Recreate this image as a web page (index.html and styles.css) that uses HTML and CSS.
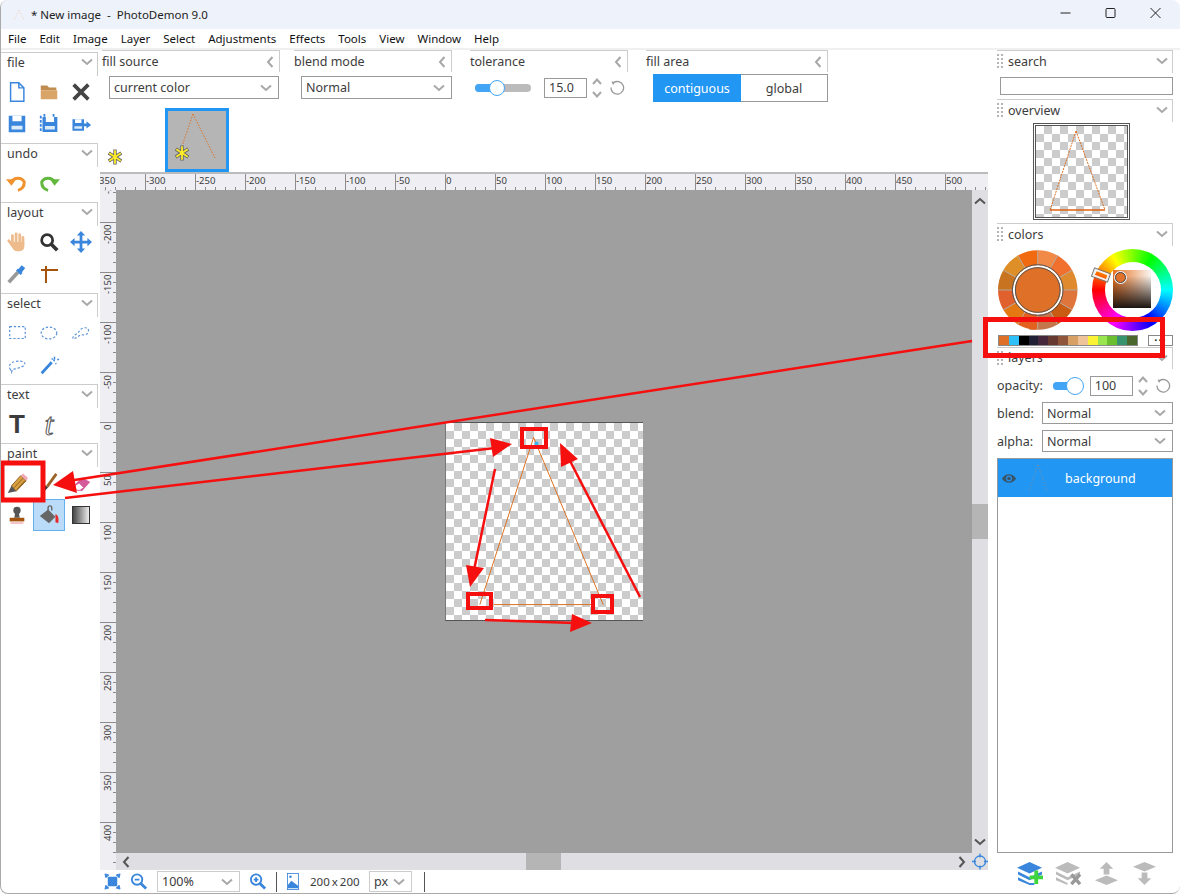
FILE: index.html
```html
<!DOCTYPE html>
<html>
<head>
    <title>PhotoDemon</title>
    <link rel="stylesheet" href="styles.css">
</head>
<body>
    <svg class="sprite" width="0" height="0">
        <symbol id="chev-down" viewBox="0 0 12 8"><path d="M1 1.500 6 6l5-4.500" fill="none" stroke="#a8a8a8" stroke-width="2"/></symbol>
        <symbol id="chev-left" viewBox="0 0 8 12"><path d="M6.500 1 2 6l4.500 5" fill="none" stroke="#a8a8a8" stroke-width="2"/></symbol>
        <symbol id="spin" viewBox="0 0 12 24"><path d="M2 8 6 3.500 10 8M2 16l4 4.500 4-4.500" fill="none" stroke="#a8a8a8" stroke-width="2"/></symbol>
        <symbol id="reset" viewBox="0 0 16 16"><path d="M4.500 2.800A6.300 6.300 0 1 1 2 7.500" fill="none" stroke="#999" stroke-width="1.300"/><path d="M2.500 1.500 6 2 4 5z" fill="#999"/></symbol>
        <symbol id="grip" viewBox="0 0 6 14"><path d="M0 0h2v2H0zM4 0h2v2H4zM0 4h2v2H0zM4 4h2v2H4zM0 8h2v2H0zM4 8h2v2H4zM0 12h2v2H0zM4 12h2v2H4z" fill="#b4b4b4"/></symbol>
        <symbol id="flower" viewBox="0 0 14 14"><path d="M7 .5v13M1.500 3.500l11 7M12.500 3.500l-11 7" stroke="#666" stroke-width="3"/><path d="M7 1v12M2 3.800l10 6.400M12 3.800 2 10.200" stroke="#ffec2a" stroke-width="1.600"/></symbol>
        <symbol id="floppy" viewBox="0 0 20 20"><path d="M1 1h18v18H1z" fill="#3a86dc"/><path d="M5 1h10v6H5z" fill="#fff"/><path d="M4 12h12v4H4z" fill="#dcebfa"/></symbol>
    </svg>

    <div class="window">
        <div class="titlebar">
            <svg class="app-icon" viewBox="0 0 14 14"><path d="M7 2 2 12M7 2l5 10" stroke="#ecd9c8" stroke-dasharray="1.500 1.500" fill="none"/></svg>
            <span class="title-text">* New image &nbsp;- &nbsp;PhotoDemon 9.0</span>
            <div class="window-btns">
                <svg viewBox="0 0 12 12"><path d="M1 6h10" stroke="#222" stroke-width="1"/></svg>
                <svg viewBox="0 0 12 12"><rect x="1.500" y="1.500" width="9" height="9" rx="1" fill="none" stroke="#222"/></svg>
                <svg viewBox="0 0 12 12"><path d="M1 1l10 10M11 1 1 11" stroke="#222"/></svg>
            </div>
        </div>
        <div class="menubar">
            <span>File</span><span>Edit</span><span>Image</span><span>Layer</span><span>Select</span><span>Adjustments</span><span>Effects</span><span>Tools</span><span>View</span><span>Window</span><span>Help</span>
        </div>

        <div class="main">
            <!-- left toolbox -->
            <div class="toolbox">
                <div class="tool-head first">file <svg class="chev"><use href="#chev-down"/></svg></div>
                <div class="tool-grid">
                    <button class="tool"><svg viewBox="0 0 24 24"><path d="M5 2h9l5.500 5.500V22H5z" fill="#fff" stroke="#3a86dc" stroke-width="1.600"/><path d="M14 2v5.500h5.500" fill="none" stroke="#3a86dc" stroke-width="1.600"/></svg></button>
                    <button class="tool"><svg viewBox="0 0 24 24"><path d="M3 7V5h7l2 2h8v3H3z" fill="#c08c50"/><path d="M3 10h18v10H3z" fill="#d9a468"/></svg></button>
                    <button class="tool"><svg viewBox="0 0 24 24"><path d="M4 4l16 16M20 4 4 20" stroke="#444" stroke-width="4"/></svg></button>
                    <button class="tool"><svg viewBox="0 0 24 24"><use href="#floppy" x="2" y="2" width="20" height="20"/></svg></button>
                    <button class="tool"><svg viewBox="0 0 24 24"><use href="#floppy" x="4" y="3" width="18" height="19"/><path d="M3 3v18M7 1v3M17 1v3" stroke="#3a86dc" stroke-width="2" stroke-dasharray="3 1.500"/></svg></button>
                    <button class="tool"><svg viewBox="0 0 24 24"><use href="#floppy" x="2" y="6" width="14" height="14"/><path d="M14 13h6" stroke="#3a86dc" stroke-width="3"/><path d="M18 9l5 4-5 4z" fill="#3a86dc"/></svg></button>
                </div>
                <div class="tool-head">undo <svg class="chev"><use href="#chev-down"/></svg></div>
                <div class="tool-grid">
                    <button class="tool"><svg viewBox="0 0 24 24"><path d="M6 11a7.500 6.500 0 0 1 14 0c0 5-3 8-7 9" fill="none" stroke="#f0922e" stroke-width="3.200"/><path d="M0 8h11l-5 7z" fill="#f0922e"/></svg></button>
                    <button class="tool"><svg viewBox="0 0 24 24"><path d="M18 11a7.500 6.500 0 0 0-14 0c0 5 3 8 7 9" fill="none" stroke="#62b83c" stroke-width="3.200"/><path d="M24 8H13l5 7z" fill="#62b83c"/></svg></button>
                </div>
                <div class="tool-head">layout <svg class="chev"><use href="#chev-down"/></svg></div>
                <div class="tool-grid">
                    <button class="tool"><svg viewBox="0 0 24 24"><path d="M7 16 3 10.500M7 14V5M11 13V3M15 13V4M18.500 14V7" stroke="#eebc8c" stroke-width="3" stroke-linecap="round"/><path d="M6 12h14v5c0 3-2 5-5 5h-3c-2.500 0-4-1-6-5z" fill="#eebc8c"/></svg></button>
                    <button class="tool"><svg viewBox="0 0 24 24"><circle cx="10" cy="10" r="6" fill="none" stroke="#333" stroke-width="3"/><path d="M14.500 14.500 21 21" stroke="#333" stroke-width="4"/></svg></button>
                    <button class="tool"><svg viewBox="0 0 24 24"><path d="M12 4v16M4 12h16" stroke="#3a86dc" stroke-width="3"/><path d="M12 0l4.500 5h-9zM12 24l4.500-5h-9zM0 12l5-4.500v9zM24 12l-5-4.500v9z" fill="#3a86dc"/></svg></button>
                    <button class="tool"><svg viewBox="0 0 24 24"><path d="M3 21 13 10" stroke="#999" stroke-width="4"/><path d="M12 7l5 5" stroke="#3a86dc" stroke-width="3"/><path d="M15 9l4-5" stroke="#3a86dc" stroke-width="5"/></svg></button>
                    <button class="tool"><svg viewBox="0 0 24 24"><path d="M3.300 7.600h18.500M8.700 3.300v18.500" stroke="#a3540e" stroke-width="2.200" fill="none"/></svg></button>
                </div>
                <div class="tool-head">select <svg class="chev"><use href="#chev-down"/></svg></div>
                <div class="tool-grid">
                    <button class="tool"><svg viewBox="0 0 24 24"><rect x="4" y="5" width="17" height="13" fill="none" class="dash"/></svg></button>
                    <button class="tool"><svg viewBox="0 0 24 24"><ellipse cx="12" cy="12" rx="8.500" ry="6.500" fill="none" class="dash"/></svg></button>
                    <button class="tool"><svg viewBox="0 0 24 24"><path d="M3 18c0-4 5-4 7-8s9-5 10-2-2 7-6 6-7 5-11 4z" fill="none" class="dash"/></svg></button>
                    <button class="tool"><svg viewBox="0 0 24 24"><path d="M5 17c-3-3-1-8 6-9s11 1 9 4-10 4-13 5l-1 3z" fill="none" class="dash"/></svg></button>
                    <button class="tool"><svg viewBox="0 0 24 24"><path d="M4 21 15 9" stroke="#3a86dc" stroke-width="3"/><path d="M18 3v3M21 6h2M15 5l1 1M19 10l1 1M17 6l1 2" stroke="#3a86dc" stroke-width="1.600"/></svg></button>
                </div>
                <div class="tool-head">text <svg class="chev"><use href="#chev-down"/></svg></div>
                <div class="tool-grid">
                    <button class="tool"><span class="glyph-t">T</span></button>
                    <button class="tool"><span class="glyph-script">t</span></button>
                </div>
                <div class="tool-head">paint <svg class="chev"><use href="#chev-down"/></svg></div>
                <div class="tool-grid">
                    <button class="tool"><svg viewBox="0 0 24 24"><path d="M6 15 16 4l6 5.500L11 21z" fill="#d9a040" stroke="#8a5a1c"/><path d="M9 17 19 6.500M12 19 21 9" stroke="#8a5a1c"/><path d="M16 4l2.500-2.500 5.500 5-2 3z" fill="#f0a8b4"/><path d="M6 15l-4 8 9-2z" fill="#555"/></svg></button>
                    <button class="tool"><svg viewBox="0 0 24 24"><path d="M10 16 20 2" stroke="#9a6428" stroke-width="3"/><path d="M7 14l4 3-6 6z" fill="#333"/></svg></button>
                    <button class="tool"><svg viewBox="0 0 24 24"><path d="M3 16 13 6l9 5-9 10z" fill="#d45a9c"/><path d="M5 15l5-3 5 5-4 3H7z" fill="#fff" stroke="#d45a9c"/></svg></button>
                    <button class="tool"><svg viewBox="0 0 24 24"><circle cx="12" cy="7" r="4" fill="#555"/><path d="M10 10h4l1 5H9z" fill="#555"/><path d="M4 15h16v4H4z" fill="#a3540e"/><path d="M5 20h14v1.500H5z" fill="#f4a8b0"/></svg></button>
                    <button class="tool active"><svg viewBox="0 0 24 24"><path d="M2 13 11 6l8 8-7 7z" fill="#666"/><path d="M11 10V4a2 2 0 0 1 4 0v3" fill="none" stroke="#666" stroke-width="1.500"/><path d="M19 11c3 1 4 5 3 10l-3-1z" fill="#e42c2c"/></svg></button>
                    <button class="tool"><div class="gradient-swatch"></div></button>
                </div>
            </div>

            <!-- tool options, rulers and canvas -->
            <div class="center">
                <div class="options">
                    <div class="opt-group g-source">
                        <div class="opt-head">fill source <svg class="chev-l"><use href="#chev-left"/></svg></div>
                        <div class="combo">current color <svg class="chev"><use href="#chev-down"/></svg></div>
                    </div>
                    <div class="opt-group g-blend">
                        <div class="opt-head">blend mode <svg class="chev-l"><use href="#chev-left"/></svg></div>
                        <div class="combo">Normal <svg class="chev"><use href="#chev-down"/></svg></div>
                    </div>
                    <div class="opt-group g-tol">
                        <div class="opt-head">tolerance <svg class="chev-l"><use href="#chev-left"/></svg></div>
                        <div class="slider-row">
                            <div class="slider"><div class="slider-fill"></div><div class="slider-thumb"></div></div>
                            <div class="num">15.0</div>
                            <svg class="spin"><use href="#spin"/></svg>
                            <svg class="reset"><use href="#reset"/></svg>
                        </div>
                    </div>
                    <div class="opt-group g-area">
                        <div class="opt-head">fill area <svg class="chev-l"><use href="#chev-left"/></svg></div>
                        <div class="toggle"><span class="on">contiguous</span><span>global</span></div>
                    </div>
                </div>
                <div class="tabstrip">
                    <svg class="flower"><use href="#flower"/></svg>
                    <div class="thumb-tab">
                        <svg viewBox="0 0 58 58"><path d="M25 3 14 35M25 3l22 44" stroke="#e07020" stroke-dasharray="1.500 1.500" fill="none"/><use href="#flower" x="6" y="34" width="16" height="16"/></svg>
                    </div>
                </div>

                <div class="viewport">
                    <div class="ruler-top">
                        <span>-350</span><span>-300</span><span>-250</span><span>-200</span><span>-150</span><span>-100</span><span>-50</span><span>0</span><span>50</span><span>100</span><span>150</span><span>200</span><span>250</span><span>300</span><span>350</span><span>400</span><span>450</span><span>500</span>
                    </div>
                    <div class="ruler-left">
                        <span>-250</span><span>-200</span><span>-150</span><span>-100</span><span>-50</span><span>0</span><span>50</span><span>100</span><span>150</span><span>200</span><span>250</span><span>300</span><span>350</span><span>400</span>
                    </div>
                    <div class="workspace">
                        <div class="canvas">
                            <svg viewBox="0 0 198 197"><path d="M88 14 34 182M88 14l70 168M48 182h98" stroke="#df7020" fill="none"/><circle cx="91" cy="20" r="2" fill="#35b8f0"/></svg>
                        </div>
                    </div>
                    <div class="vscroll">
                        <svg class="chev-dark" viewBox="0 0 12 8"><path d="M1 6.500 6 2l5 4.500" fill="none" stroke="#555" stroke-width="2"/></svg>
                        <div class="vthumb"></div>
                        <svg class="chev-dark" viewBox="0 0 12 8"><path d="M1 1.500 6 6l5-4.500" fill="none" stroke="#555" stroke-width="2"/></svg>
                    </div>
                    <div class="hscroll">
                        <svg class="chev-side" viewBox="0 0 8 12"><path d="M6.500 1 2 6l4.500 5" fill="none" stroke="#555" stroke-width="2"/></svg>
                        <div class="hthumb"></div>
                        <svg class="chev-side" viewBox="0 0 8 12"><path d="M1.500 1 6 6l-4.500 5" fill="none" stroke="#555" stroke-width="2"/></svg>
                    </div>
                    <div class="corner">
                        <svg viewBox="0 0 16 16"><circle cx="8" cy="8" r="5.500" fill="none" stroke="#3a86dc" stroke-width="1.300"/><path d="M8 0v4M8 12v4M0 8h4M12 8h4" stroke="#3a86dc" stroke-width="1.300"/></svg>
                    </div>
                </div>

                <div class="statusbar">
                    <svg class="st-ico fit" viewBox="0 0 18 18"><path d="M4 4h10v10H4z" fill="#3a86dc"/><path d="M1 1l4 1-3 3zM17 1l-4 1 3 3zM1 17l4-1-3-3zM17 17l-4-1 3-3z" fill="#3a86dc" stroke="#3a86dc"/></svg>
                    <svg class="st-ico" viewBox="0 0 18 18"><circle cx="7.500" cy="7" r="5.500" fill="#fff" stroke="#3a86dc" stroke-width="2"/><path d="M5 7h5" stroke="#3a86dc" stroke-width="2"/><path d="M11.500 11 17 16.500" stroke="#3a86dc" stroke-width="3"/></svg>
                    <div class="combo zoom">100% <svg class="chev"><use href="#chev-down"/></svg></div>
                    <svg class="st-ico" viewBox="0 0 18 18"><circle cx="7.500" cy="7" r="5.500" fill="#fff" stroke="#3a86dc" stroke-width="2"/><path d="M5 7h5M7.500 4.500v5" stroke="#3a86dc" stroke-width="2"/><path d="M11.500 11 17 16.500" stroke="#3a86dc" stroke-width="3"/></svg>
                    <div class="st-div"></div>
                    <svg class="st-ico pic" viewBox="0 0 14 20"><rect x=".5" y=".5" width="13" height="19" fill="#fff" stroke="#3a86dc"/><path d="M1 18v-4l4-5 4 3 4 3v3z" fill="#3a86dc"/><circle cx="4" cy="4.500" r="1.500" fill="#3a86dc"/></svg>
                    <span class="st-size">200 x 200</span>
                    <div class="combo unit">px <svg class="chev"><use href="#chev-down"/></svg></div>
                    <div class="st-div last"></div>
                </div>
            </div>

            <!-- right side panels -->
            <div class="panels">
                <div class="side-head"><svg class="grip"><use href="#grip"/></svg>search <svg class="chev"><use href="#chev-down"/></svg></div>
                <div class="search-input"></div>
                <div class="side-head"><svg class="grip"><use href="#grip"/></svg>overview <svg class="chev"><use href="#chev-down"/></svg></div>
                <div class="overview">
                    <div class="overview-img">
                        <svg viewBox="0 0 91 91"><path d="M40 5 14 84M40 5l29 79" stroke="#df7020" stroke-dasharray="2 1" fill="none"/><path d="M14 84h55" stroke="#df6010" stroke-width="1.500"/></svg>
                    </div>
                </div>
                <div class="side-head"><svg class="grip"><use href="#grip"/></svg>colors <svg class="chev"><use href="#chev-down"/></svg></div>
                <div class="wheels">
                    <svg class="swatch-wheel" viewBox="0 0 80 80">
                        <g fill="none" stroke-width="17" transform="rotate(-90 40 40)">
                            <circle cx="40" cy="40" r="31.500" pathLength="12" stroke-dasharray="1 11" stroke-dashoffset="0" stroke="#f28a47"/>
                            <circle cx="40" cy="40" r="31.500" pathLength="12" stroke-dasharray="1 11" stroke-dashoffset="-1" stroke="#f2702e"/>
                            <circle cx="40" cy="40" r="31.500" pathLength="12" stroke-dasharray="1 11" stroke-dashoffset="-2" stroke="#df8a2c"/>
                            <circle cx="40" cy="40" r="31.500" pathLength="12" stroke-dasharray="1 11" stroke-dashoffset="-3" stroke="#e0753c"/>
                            <circle cx="40" cy="40" r="31.500" pathLength="12" stroke-dasharray="1 11" stroke-dashoffset="-4" stroke="#c75c12"/>
                            <circle cx="40" cy="40" r="31.500" pathLength="12" stroke-dasharray="1 11" stroke-dashoffset="-5" stroke="#c4754a"/>
                            <circle cx="40" cy="40" r="31.500" pathLength="12" stroke-dasharray="1 11" stroke-dashoffset="-6" stroke="#e3601f"/>
                            <circle cx="40" cy="40" r="31.500" pathLength="12" stroke-dasharray="1 11" stroke-dashoffset="-7" stroke="#e47812"/>
                            <circle cx="40" cy="40" r="31.500" pathLength="12" stroke-dasharray="1 11" stroke-dashoffset="-8" stroke="#e0602e"/>
                            <circle cx="40" cy="40" r="31.500" pathLength="12" stroke-dasharray="1 11" stroke-dashoffset="-9" stroke="#c8731f"/>
                            <circle cx="40" cy="40" r="31.500" pathLength="12" stroke-dasharray="1 11" stroke-dashoffset="-10" stroke="#df8f28"/>
                            <circle cx="40" cy="40" r="31.500" pathLength="12" stroke-dasharray="1 11" stroke-dashoffset="-11" stroke="#f26a10"/>
                        </g>
                        <g stroke="#b5a598" stroke-width="1">
                            <path d="M40 0v80M0 40h80M20 5.400l40 69.200M5.400 20l69.200 40M60 5.400 20 74.600M74.600 20 5.400 60"/>
                        </g>
                        <circle cx="40" cy="40" r="24" fill="#df7028" stroke="#fff" stroke-width="2"/>
                        <circle cx="40" cy="40" r="25.500" fill="none" stroke="#555" stroke-width="1"/>
                        <circle cx="40" cy="40" r="22.500" fill="none" stroke="#555" stroke-width="1"/>
                    </svg>
                    <div class="hue-wheel">
                        <div class="hue-hole"></div>
                        <div class="hue-square"></div>
                        <div class="hue-marker"></div>
                        <div class="sq-marker"></div>
                    </div>
                </div>
                <div class="palette">
                    <div class="swatches">
                        <i class="c1"></i><i class="c2"></i><i class="c3"></i><i class="c4"></i><i class="c5"></i><i class="c6"></i><i class="c7"></i><i class="c8"></i><i class="c9"></i><i class="c10"></i><i class="c11"></i><i class="c12"></i><i class="c13"></i><i class="c14"></i>
                    </div>
                    <div class="more">...</div>
                </div>
                <div class="side-head layers-head"><svg class="grip"><use href="#grip"/></svg>layers <svg class="chev"><use href="#chev-down"/></svg></div>
                <div class="layer-row opacity">
                    <span>opacity:</span>
                    <div class="slider small"><div class="slider-fill"></div><div class="slider-thumb"></div></div>
                    <div class="num">100</div>
                    <svg class="spin"><use href="#spin"/></svg>
                    <svg class="reset"><use href="#reset"/></svg>
                </div>
                <div class="layer-row"><span>blend:</span><div class="combo">Normal <svg class="chev"><use href="#chev-down"/></svg></div></div>
                <div class="layer-row"><span>alpha:</span><div class="combo">Normal <svg class="chev"><use href="#chev-down"/></svg></div></div>
                <div class="layer-list">
                    <div class="layer-item">
                        <svg class="eye" viewBox="0 0 18 12"><path d="M1 6c4-6.500 12-6.500 16 0-4 6.500-12 6.500-16 0z" fill="#3a5468"/><circle cx="9" cy="6" r="3.300" fill="#2196f3"/><circle cx="9" cy="6" r="2" fill="#3a5468"/></svg>
                        <svg class="layer-thumb" viewBox="0 0 24 30"><path d="M12 2 3 28M12 2l9 26" stroke="#8a8f98" stroke-dasharray="1 2" fill="none"/></svg>
                        <span>background</span>
                    </div>
                </div>
                <div class="layer-actions">
                    <svg viewBox="0 0 28 26"><path d="M13 1l13 6-13 6L0 7z" fill="#3a86dc"/><path d="M1 11l12 6 13-6v3l-13 6-12-6zM1 17l12 6 5 0v2H13L1 20z" fill="#3a86dc"/><path d="M20 10v14M13 17h14" stroke="#3dd43d" stroke-width="4"/></svg>
                    <svg viewBox="0 0 28 26"><path d="M13 1l13 6-13 6L0 7z" fill="#bbb"/><path d="M1 11l12 6 13-6v3l-13 6-12-6zM1 17l12 6v2L1 20z" fill="#bbb"/><path d="M17 14l9 10M26 14l-9 10" stroke="#999" stroke-width="3.500"/></svg>
                    <svg viewBox="0 0 28 26"><path d="M14 1l7 7h-4v6h-6V8H7z" fill="#bbb"/><path d="M14 15l12 5-12 5-12-5z" fill="#bbb"/></svg>
                    <svg viewBox="0 0 28 26"><path d="M14 1l12 5-12 5L2 6z" fill="#bbb"/><path d="M14 25l7-7h-4v-6h-6v6H7z" fill="#bbb"/></svg>
                </div>
            </div>
        </div>

        <!-- red marks drawn over the whole screenshot -->
        <svg class="annotations" viewBox="0 0 1180 894">
            <g fill="none" stroke="#f50f0f">
                <rect x="985.500" y="319.500" width="177" height="36" stroke-width="5"/>
                <rect x="2" y="463" width="41" height="37" stroke-width="5"/>
                <rect x="522" y="429" width="24" height="18" stroke-width="4"/>
                <rect x="468" y="594" width="23" height="14" stroke-width="4"/>
                <rect x="593" y="596" width="19" height="16" stroke-width="4"/>
                <path d="M972 341 68 481" stroke-width="2.500"/>
                <path d="M65 498 495 448" stroke-width="2.500"/>
                <path d="M495 469 474 570" stroke-width="2.500"/>
                <path d="M485 620 575 623" stroke-width="2.500"/>
                <path d="M640 597 568 457" stroke-width="2.500"/>
            </g>
            <g fill="#f50f0f">
                <path d="M53 485 73 471 77 493z"/>
                <path d="M512 444 490 438 493 457z"/>
                <path d="M470 587 466 565 484 568z"/>
                <path d="M592 623 572 614 570 632z"/>
                <path d="M560 443 561 467 578 459z"/>
            </g>
        </svg>
    </div>
</body>
</html>
```

FILE: styles.css
```css
* {
    box-sizing: border-box;
}

body {
    margin: 0;
    background-color: #fff;
    font-family: "Noto Sans", sans-serif;
    font-size: 12.500px;
    color: #3c3c3c;
}

.sprite {
    position: absolute;
}

.window {
    position: relative;
    width: 1180px;
    height: 894px;
    display: flex;
    flex-direction: column;
    overflow: hidden;
    background-color: #fff;
    border-radius: 8px;
    border-left: 1px solid #aaa;
    border-bottom: 1px solid #aaa;
}

/* title and menu */
.titlebar {
    height: 29px;
    flex: none;
    display: flex;
    align-items: center;
    background-color: #eef2fa;
    padding-left: 11px;
    font-size: 11.500px;
    color: #222;
}

.app-icon {
    width: 14px;
    height: 14px;
    margin-right: 5px;
}

.window-btns {
    margin-left: auto;
    margin-right: 2px;
    display: flex;
}

.window-btns svg {
    width: 45px;
    height: 12px;
    margin-top: -3px;
}

.menubar {
    height: 21px;
    flex: none;
    display: flex;
    align-items: center;
    gap: 13px;
    padding-left: 7px;
    font-size: 11.500px;
    color: #111;
    border-bottom: 2px solid #f0f0f0;
}

.main {
    flex: 1;
    display: flex;
    min-height: 0;
}

/* toolbox on the left */
.toolbox {
    width: 99px;
    flex: none;
    padding-top: 2px;
}

.tool-head {
    height: 24px;
    margin-right: 2px;
    margin-top: 3px;
    padding: 0 0 5px 6px;
    display: flex;
    align-items: center;
    justify-content: space-between;
    border-top: 1px solid #ccc;
    border-right: 1px solid #ccc;
}

.tool-head.first {
    margin-top: 0;
}

.chev {
    width: 12px;
    height: 8px;
    flex: none;
}

.tool-head .chev {
    margin-right: 4px;
}

.tool-grid {
    display: grid;
    grid-template-columns: repeat(3, 32px);
    grid-auto-rows: 32px;
}

.tool {
    padding: 0;
    background: none;
    border: 1px solid transparent;
    display: flex;
    align-items: center;
    justify-content: center;
}

.tool svg {
    width: 22px;
    height: 22px;
}

.tool.active {
    background-color: #bbdcf9;
    border-color: #63b0f0;
}

.dash {
    stroke: #5c93d6;
    stroke-width: 1.300;
    stroke-dasharray: 2.500 2;
}

.glyph-t {
    font-family: "Liberation Sans", sans-serif;
    font-weight: bold;
    font-size: 26px;
    line-height: 1;
    color: #3c3c3c;
}

.glyph-script {
    font-family: "Liberation Serif", serif;
    font-style: italic;
    font-size: 32px;
    line-height: 1;
    color: #fff;
    -webkit-text-stroke: 1px #555;
}

.gradient-swatch {
    width: 18px;
    height: 18px;
    border: 1.500px solid #333;
    background: linear-gradient(to right, #444, #eee);
}

/* options across the top */
.center {
    flex: 1;
    min-width: 0;
    display: flex;
    flex-direction: column;
}

.options {
    height: 55px;
    flex: none;
    display: flex;
}

.opt-head {
    height: 22px;
    display: flex;
    align-items: center;
    justify-content: space-between;
    border-top: 1px solid #ccc;
    border-right: 1px solid #ccc;
    padding-right: 5px;
}

.chev-l {
    width: 8px;
    height: 12px;
}

.g-source {
    width: 180px;
    padding-left: 2px;
}

.g-blend {
    width: 172px;
    padding-left: 14px;
}

.g-tol {
    width: 176px;
    padding-left: 18px;
}

.g-area {
    width: 200px;
    padding-left: 18px;
}

.combo {
    height: 23px;
    display: flex;
    align-items: center;
    justify-content: space-between;
    padding: 0 6px 0 4px;
    border: 1px solid #999;
    background-color: #fff;
}

.g-source .combo {
    margin: 4px 1px 0 7px;
}

.g-blend .combo {
    margin: 4px 0 0 7px;
}

.slider-row {
    display: flex;
    align-items: center;
    margin-top: 4px;
    height: 24px;
}

.slider {
    position: relative;
    width: 56px;
    height: 8px;
    margin-left: 5px;
    background-color: #bbb;
    border-radius: 4px;
}

.slider-fill {
    width: 22px;
    height: 8px;
    background-color: #42a5f5;
    border-radius: 4px;
}

.slider-thumb {
    position: absolute;
    left: 14px;
    top: -4px;
    width: 16px;
    height: 16px;
    border-radius: 50%;
    background-color: #fff;
    border: 1px solid #42a5f5;
}

.num {
    width: 43px;
    height: 20px;
    margin-left: 13px;
    padding-left: 4px;
    border: 1px solid #999;
    line-height: 18px;
}

.spin {
    width: 12px;
    height: 24px;
    margin-left: 4px;
}

.reset {
    width: 16px;
    height: 16px;
    margin-left: 6px;
}

.toggle {
    display: flex;
    height: 28px;
    margin: 2px 0 0 7px;
    border: 1px solid #999;
}

.toggle span {
    flex: 1;
    display: flex;
    align-items: center;
    justify-content: center;
}

.toggle .on {
    flex: none;
    width: 88px;
    margin: -1px 0 -1px -1px;
    background-color: #2196f3;
    color: #fff;
}

/* open image thumbnails */
.tabstrip {
    height: 67px;
    flex: none;
    display: flex;
    align-items: flex-end;
}

.flower {
    width: 16px;
    height: 16px;
    margin: 0 42px 7px 7px;
}

.thumb-tab {
    width: 64px;
    height: 64px;
    border: 3px solid #2196f3;
    background-color: #b5b5b5;
}

.thumb-tab svg {
    display: block;
}

/* rulers, canvas area and scrollbars */
.viewport {
    flex: 1;
    min-height: 0;
    display: grid;
    grid-template-columns: 16px 1fr 16px;
    grid-template-rows: 18px 1fr 17px;
}

.ruler-top {
    grid-column: 1 / 4;
    display: flex;
    overflow: hidden;
    border-top: 2px solid #bbb;
    background-color: #eeeef3;
    background-image:
        repeating-linear-gradient(to right, #8c8c8c 0 1px, transparent 1px 50px),
        repeating-linear-gradient(to right, #8c8c8c 0 1px, transparent 1px 10px);
    background-size: 100% 100%, 100% 3px;
    background-position: 45px 0, 5px bottom;
    background-repeat: no-repeat;
    font-size: 9.500px;
    line-height: 14px;
}

.ruler-top span {
    flex: none;
    width: 50px;
    padding-left: 2px;
    position: relative;
    left: -6px;
}

.ruler-left {
    grid-row: 2 / 4;
    display: flex;
    flex-direction: column;
    overflow: hidden;
    background-color: #eeeef3;
    background-image:
        repeating-linear-gradient(to bottom, #8c8c8c 0 1px, transparent 1px 50px),
        repeating-linear-gradient(to bottom, #8c8c8c 0 1px, transparent 1px 10px);
    background-size: 100% 100%, 3px 100%;
    background-position: 0 32px, right 2px;
    background-repeat: no-repeat;
    font-size: 9.500px;
    line-height: 16px;
}

.ruler-left span {
    flex: none;
    height: 50px;
    position: relative;
    top: -18px;
    writing-mode: vertical-rl;
    transform: rotate(180deg);
    text-align: right;
    padding-bottom: 3px;
}

.workspace {
    background-color: #9f9f9f;
    display: flex;
    align-items: center;
    justify-content: center;
}

.canvas {
    width: 198px;
    height: 199px;
    border-top: 1px solid #555;
    border-bottom: 1px solid #555;
    border-left: 1px solid #777;
    background-color: #fff;
    background-image: repeating-conic-gradient(#ccc 0 25%, #fff 0 50%);
    background-size: 16px 16px;
}

.canvas svg {
    display: block;
    width: 197px;
    height: 197px;
}

.vscroll {
    background-color: #dedee3;
    display: flex;
    flex-direction: column;
    align-items: center;
    justify-content: space-between;
    padding: 7px 0;
    position: relative;
}

.vthumb {
    position: absolute;
    left: 0;
    top: 314px;
    width: 16px;
    height: 35px;
    background-color: #b5b5b5;
}

.chev-dark {
    width: 12px;
    height: 8px;
}

.hscroll {
    grid-column: 2;
    background-color: #dedee3;
    display: flex;
    align-items: center;
    justify-content: space-between;
    padding: 0 6px;
    position: relative;
}

.hthumb {
    position: absolute;
    left: 410px;
    top: 0;
    width: 35px;
    height: 17px;
    background-color: #b5b5b5;
}

.chev-side {
    width: 8px;
    height: 12px;
}

.corner {
    background-color: #dedee3;
}

.corner svg {
    display: block;
    width: 16px;
    height: 17px;
}

/* status bar */
.statusbar {
    height: 23px;
    flex: none;
    display: flex;
    align-items: center;
    padding-left: 4px;
    background-color: #fff;
}

.st-ico {
    width: 17px;
    height: 17px;
    flex: none;
}

.st-ico.fit {
    margin-right: 9px;
}

.combo.zoom {
    width: 83px;
    height: 21px;
    margin: 0 9px 0 10px;
    border-color: #ccc;
}

.st-div {
    width: 1px;
    height: 20px;
    margin: 0 10px 0 10px;
    background-color: #555;
}

.st-ico.pic {
    width: 12px;
}

.st-size {
    width: 48px;
    margin: 0 11px;
    font-size: 11.500px;
    word-spacing: -1px;
    white-space: nowrap;
}

.combo.unit {
    width: 43px;
    height: 21px;
    border-color: #ccc;
}

.st-div.last {
    margin-left: 12px;
}

/* side panels */
.panels {
    width: 192px;
    flex: none;
    padding: 0 7px 0 9px;
    display: flex;
    flex-direction: column;
}

.side-head {
    height: 23px;
    flex: none;
    padding-bottom: 2px;
    display: flex;
    align-items: center;
    border-top: 1px solid #ccc;
    border-right: 1px solid #ccc;
}

.side-head .grip {
    width: 6px;
    height: 14px;
    margin-right: 5px;
}

.side-head .chev {
    margin-left: auto;
    margin-right: 4px;
}

.search-input {
    height: 18px;
    margin: 4px 0 4px 3px;
    flex: none;
    border: 1px solid #999;
}

.overview {
    display: flex;
    padding: 1px 0 3px 36px;
}

.overview-img {
    width: 97px;
    height: 97px;
    border: 1px solid #555;
    box-shadow: inset 0 0 0 1px #fff, inset 0 0 0 2px #555;
    background-color: #fff;
}

.overview-img svg {
    display: block;
    width: 91px;
    height: 91px;
    margin: 2px;
    background-color: #fff;
    background-image: repeating-conic-gradient(#ccc 0 25%, #fff 0 50%);
    background-size: 16px 16px;
}

.wheels {
    height: 88px;
    flex: none;
    display: flex;
    align-items: center;
    padding-left: 1px;
    gap: 14px;
}

.swatch-wheel {
    width: 80px;
    height: 80px;
}

.hue-wheel {
    position: relative;
    width: 82px;
    height: 82px;
    border-radius: 50%;
    background: conic-gradient(from 270deg, #f00, #ff0, #0f0, #0ff, #00f, #f0f, #f00);
}

.hue-hole {
    position: absolute;
    left: 13px;
    top: 13px;
    width: 56px;
    height: 56px;
    border-radius: 50%;
    background-color: #fff;
}

.hue-square {
    position: absolute;
    left: 21px;
    top: 21px;
    width: 38px;
    height: 38px;
    background:
        linear-gradient(to top, #1c1410, rgba(0, 0, 0, 0) 85%),
        linear-gradient(to right, #e8701f, #f8f4f0);
}

.hue-marker {
    position: absolute;
    left: 1px;
    top: 22px;
    width: 16px;
    height: 8px;
    border: 2px solid #f4f0ee;
    outline: 1px solid #777;
    background-color: transparent;
    transform: rotate(20deg);
}

.sq-marker {
    position: absolute;
    left: 23px;
    top: 23px;
    width: 11px;
    height: 11px;
    border-radius: 50%;
    background-color: #e0702a;
    border: 1px solid #444;
    box-shadow: 0 0 0 1px #eee;
}

.palette {
    height: 14px;
    flex: none;
    display: flex;
    align-items: center;
    padding-left: 1px;
    margin-top: -1px;
}

.swatches {
    display: flex;
    width: 140px;
    height: 11px;
    border: 1px solid #888;
}

.swatches i {
    flex: 1;
    display: block;
}

.c1 { background-color: #df7028; }
.c2 { background-color: #30c0f8; }
.c3 { background-color: #000; }
.c4 { background-color: #222034; }
.c5 { background-color: #45283c; }
.c6 { background-color: #663931; }
.c7 { background-color: #8f563b; }
.c8 { background-color: #d9a066; }
.c9 { background-color: #eec39a; }
.c10 { background-color: #fbf236; }
.c11 { background-color: #99e550; }
.c12 { background-color: #6abe30; }
.c13 { background-color: #37946e; }
.c14 { background-color: #4b692f; }

.more {
    width: 25px;
    height: 11px;
    margin-left: 10px;
    padding-bottom: 7px;
    border: 1px solid #888;
    display: flex;
    align-items: center;
    justify-content: center;
    font-size: 11px;
    line-height: 1;
    font-weight: bold;
    letter-spacing: 1px;
    color: #222;
}

.layers-head {
    height: 22px;
}

.layer-row {
    height: 28px;
    flex: none;
    display: flex;
    align-items: center;
}

.layer-row .combo {
    width: 131px;
    margin-left: auto;
    height: 22px;
}

.layer-row.opacity {
    height: 23px;
    margin-top: 5px;
    margin-bottom: 2px;
}

.slider.small {
    width: 30px;
    margin-left: 10px;
}

.slider.small .slider-fill {
    width: 22px;
}

.slider.small .slider-thumb {
    left: 13px;
    top: -5px;
    width: 18px;
    height: 18px;
}

.layer-row .num {
    margin-left: 7px;
}

.layer-list {
    flex: 1;
    min-height: 0;
    margin-top: 3px;
    border: 1px solid #999;
}

.layer-item {
    height: 38px;
    display: flex;
    align-items: center;
    padding-left: 3px;
    background-color: #2196f3;
    color: #fff;
}

.eye {
    width: 16px;
    height: 11px;
}

.layer-thumb {
    width: 24px;
    height: 30px;
    margin: 0 8px 0 9px;
}

.layer-item span {
    margin-left: 7px;
}

.layer-actions {
    height: 40px;
    flex: none;
    display: flex;
    align-items: center;
    justify-content: center;
    gap: 11px;
    padding-left: 4px;
}

.layer-actions svg {
    width: 27px;
    height: 25px;
}

.annotations {
    position: absolute;
    left: -1px;
    top: 0;
    width: 1180px;
    height: 894px;
    pointer-events: none;
}
```
